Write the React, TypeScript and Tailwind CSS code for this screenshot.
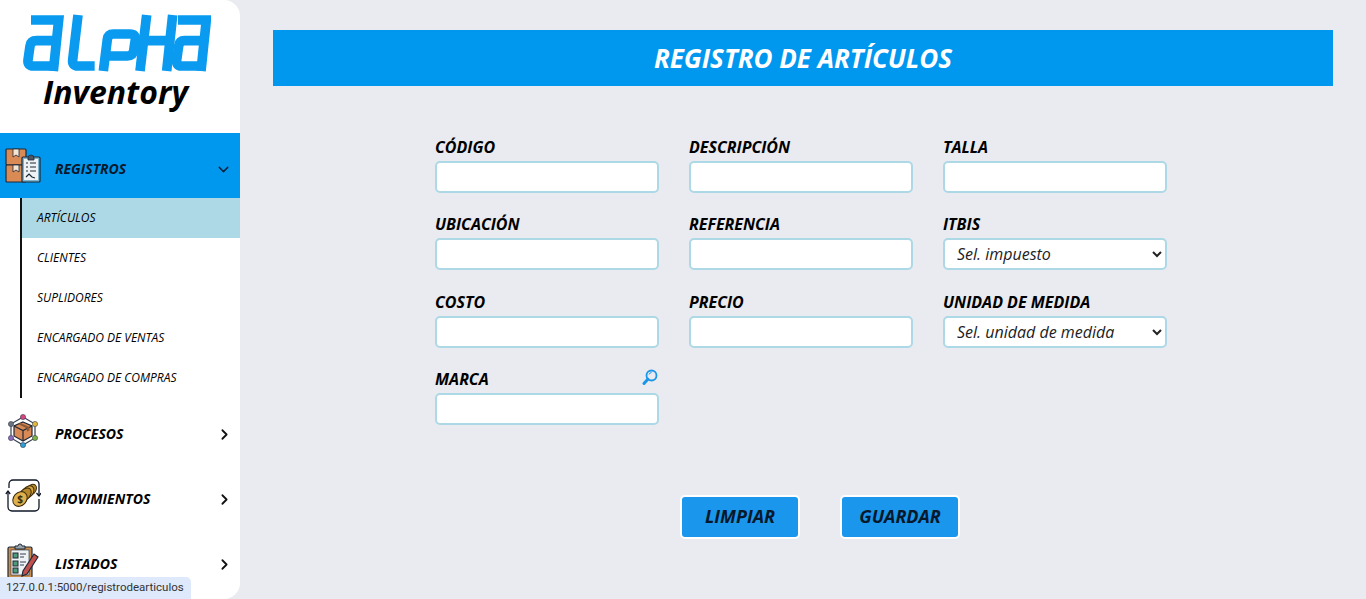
import React from "react";
import { ChevronDown, ChevronRight } from "lucide-react";

const font = { fontFamily: '"Open Sans", sans-serif' };

function AlphaLogo() {
  return (
    <svg viewBox="0 0 585 195" width="195" height="65" fill="none" stroke="#0a9bf0" strokeWidth="29" aria-label="Alpha">
      {/* a */}
      <path d="M45 30H128L112 183" />
      <path d="M116 92H62Q44 92 42 108L36 150Q34 168 52 168H112" />
      {/* L */}
      <path d="M186 15L170 150Q168 168 186 168H236" />
      {/* P */}
      <path d="M262 183L274 88Q276 72 292 72H342Q360 72 358 88L353 122Q351 138 334 138H272" />
      {/* H */}
      <path d="M372 183L392 15" />
      <path d="M470 15L452 183" />
      <path d="M382 92H460" />
      {/* a */}
      <path d="M486 30H571L555 183" />
      <path d="M558 92H506Q490 92 488 108L482 150Q480 168 496 168H555" />
    </svg>
  );
}

function RegistrosIcon() {
  return (
    <svg viewBox="0 0 36 36" width="36" height="36">
      <rect x="1" y="1" width="20" height="16" rx="1" fill="#d98a55" stroke="#1f2937" strokeWidth="1.2" />
      <rect x="1" y="17" width="20" height="17" rx="1" fill="#d98a55" stroke="#1f2937" strokeWidth="1.2" />
      <path d="M8 1h6v8l-3-2-3 2z" fill="#f4e6d4" stroke="#1f2937" strokeWidth=".8" />
      <path d="M8 17h6v7l-3-2-3 2z" fill="#f4e6d4" stroke="#1f2937" strokeWidth=".8" />
      <rect x="17" y="9" width="18" height="25" rx="1" fill="#7fb4cc" stroke="#1f2937" strokeWidth="1.2" />
      <rect x="19" y="11" width="14" height="21" fill="#eef2f4" />
      <path d="M23 10a3 3 0 0 1 6 0v2h-6z" fill="#4b5563" stroke="#1f2937" strokeWidth=".8" />
      <path d="M21 15h2M25 15h6M21 19h2M25 19h6M21 23h2M25 23h6" stroke="#1f2937" strokeWidth="1.2" />
      <path d="M21 29l3-3 3 3 3 1" stroke="#1f2937" strokeWidth="1.2" fill="none" />
    </svg>
  );
}

function ProcesosIcon() {
  const nodes = [
    [17, 3, "#d6457f"],
    [29, 10, "#e3b93c"],
    [29, 24, "#7cb342"],
    [17, 31, "#2f9fd8"],
    [5, 24, "#8e6bbf"],
    [5, 10, "#6b7280"],
  ] as const;
  return (
    <svg viewBox="0 0 34 34" width="34" height="34">
      <path d="M17 3L29 10V24L17 31L5 24V10Z" fill="#fff" stroke="#374151" strokeWidth="1.2" />
      <path d="M17 8l9 4v10l-9 5-9-5V12z" fill="#d98a55" stroke="#1f2937" strokeWidth="1.2" />
      <path d="M8 12l9 4.500 9-4.500M17 16.500V27" fill="none" stroke="#1f2937" strokeWidth="1.2" />
      <path d="M12 10l9 4.500v3l2.500-1v-3.500l-9-4z" fill="#8a5a36" />
      {nodes.map(([cx, cy, c]) => (
        <circle key={`${cx}-${cy}`} cx={cx} cy={cy} r="2.600" fill={c} stroke="#374151" strokeWidth=".6" />
      ))}
    </svg>
  );
}

function MovimientosIcon() {
  return (
    <svg viewBox="0 0 36 33" width="36" height="33">
      {/* frame with the two arrows */}
      <path d="M4 9V5a4 4 0 0 1 4-4h22a4 4 0 0 1 4 4v11" fill="none" stroke="#111827" strokeWidth="1.300" />
      <path d="M34 20v8a4 4 0 0 1-4 4H7a4 4 0 0 1-4-4V13" fill="none" stroke="#111827" strokeWidth="1.300" />
      <path d="M31.500 14l2.500 3 2-3M.8 15l2.200-3 2.200 3" fill="none" stroke="#111827" strokeWidth="1.300" />
      {/* coins */}
      <g stroke="#3b2a0a" strokeWidth="1">
        <ellipse cx="26" cy="11" rx="4.500" ry="6.500" transform="rotate(42 26 11)" fill="#b8892a" />
        <ellipse cx="23" cy="13" rx="5" ry="7" transform="rotate(42 23 13)" fill="#d4a53e" />
        <ellipse cx="20" cy="15.500" rx="5" ry="7.500" transform="rotate(42 20 15.500)" fill="#b8892a" />
        <ellipse cx="15" cy="20" rx="6.500" ry="8" transform="rotate(42 15 20)" fill="#e0b04a" />
      </g>
      <text x="15" y="24" fontSize="10" fontWeight="700" textAnchor="middle" fill="#3b2a0a" style={font}>
        $
      </text>
    </svg>
  );
}

function ListadosIcon() {
  return (
    <svg viewBox="0 0 32 36" width="32" height="36">
      <rect x="1" y="4" width="24" height="31" rx="1.500" fill="#c98d4f" stroke="#1f2937" strokeWidth="1.200" />
      <rect x="4" y="7" width="18" height="25" fill="#eef2f4" stroke="#1f2937" strokeWidth=".6" />
      <path d="M8 5V3h3a2 2 0 0 1 4 0h3v3H8z" fill="#9aa5ad" stroke="#1f2937" strokeWidth="1" />
      <g fill="#4f9a78" stroke="#1f2937" strokeWidth="1">
        <rect x="6" y="10" width="5" height="5" />
        <rect x="6" y="18" width="5" height="5" />
        <rect x="6" y="25" width="5" height="5" />
      </g>
      <path d="M13 11h6M13 14h4M13 19h6M13 22h4" stroke="#374151" strokeWidth="1.200" />
      <path d="M15 33l1-5L27 11l4 3-11 17z" fill="#c2504d" stroke="#1f2937" strokeWidth="1.200" />
    </svg>
  );
}

const subItems = ["ARTÍCULOS", "CLIENTES", "SUPLIDORES", "ENCARGADO DE VENTAS", "ENCARGADO DE COMPRAS"];

function NavRow({ icon, label }: { icon: React.ReactNode; label: string }) {
  return (
    <div className="flex h-[65px] items-center">
      <div className="flex w-[55px] shrink-0 justify-center pr-[9px]">{icon}</div>
      <span className="flex-1 pt-[6px] text-[14px] font-bold italic text-black">{label}</span>
      <ChevronRight size={17} strokeWidth={2.5} className="mr-[7px] mt-[7px] text-[#111]" />
    </div>
  );
}

function Field({ label, search, options }: { label: string; search?: boolean; options?: string }) {
  return (
    <div className="flex flex-col">
      <div className="mb-[2px] flex h-[24px] items-center justify-between">
        <span className="text-[16px] font-bold italic text-black">{label}</span>
        {search && (
          <svg viewBox="0 0 16 16" width="16" height="16" className="mr-[1px] mb-[4px]">
            <circle cx="9.500" cy="6.500" r="5" fill="none" stroke="#1a96ea" strokeWidth="1.800" />
            <path d="M2 14.500L5.800 10.200" stroke="#1a96ea" strokeWidth="3" strokeLinecap="round" />
            <path d="M7 5.500a3 3 0 0 1 2.500-2" fill="none" stroke="#1a96ea" strokeWidth="1" />
          </svg>
        )}
      </div>
      {options ? (
        <select
          defaultValue={options}
          className="h-[32px] w-full rounded-[5px] border-2 border-[#add8e6] bg-white pl-[8px] text-[16px] italic text-[#222]"
        >
          <option>{options}</option>
        </select>
      ) : (
        <input type="text" className="h-[32px] w-full rounded-[5px] border-2 border-[#add8e6] bg-white" />
      )}
    </div>
  );
}

export default function App() {
  return (
    <div className="relative flex h-screen overflow-hidden bg-[#e9ebf0]" style={font}>
      <aside className="flex h-full w-[240px] shrink-0 flex-col overflow-hidden rounded-r-[16px] bg-white">
        <div className="flex h-[133px] shrink-0 flex-col">
          <div className="ml-[16px] mt-[10px]">
            <AlphaLogo />
          </div>
          <div className="mt-[-2px] pl-[43px] text-[32px] font-bold italic leading-[38px] text-black">Inventory</div>
        </div>

        <div className="flex h-[65px] shrink-0 items-center bg-[#0098ef]">
          <div className="flex w-[55px] shrink-0 justify-center pr-[9px]">
            <RegistrosIcon />
          </div>
          <span className="flex-1 pt-[6px] text-[14px] font-bold italic text-[#07182b]">REGISTROS</span>
          <ChevronDown size={17} strokeWidth={2} className="mr-[8px] mt-[7px] text-[#0b2440]" />
        </div>

        <div className="ml-[20px] shrink-0 border-l-2 border-[#111]">
          {subItems.map((item, i) => (
            <div
              key={item}
              className={`flex h-[40px] items-center pl-[15px] text-[12px] italic text-black ${
                i === 0 ? "bg-[#add8e6]" : ""
              }`}
            >
              {item}
            </div>
          ))}
        </div>

        <NavRow icon={<ProcesosIcon />} label="PROCESOS" />
        <NavRow icon={<MovimientosIcon />} label="MOVIMIENTOS" />
        <NavRow icon={<ListadosIcon />} label="LISTADOS" />
      </aside>

      <main className="flex-1 px-[33px] pt-[30px]">
        <div className="flex h-[56px] items-center justify-center bg-[#0098ef]">
          <h1 className="text-[26px] font-bold italic text-white">REGISTRO DE ARTÍCULOS</h1>
        </div>

        <div className="ml-[162px] mt-[49px] grid w-[732px] grid-cols-3 gap-x-[30px] gap-y-[19.33px]">
          <Field label="CÓDIGO" />
          <Field label="DESCRIPCIÓN" />
          <Field label="TALLA" />
          <Field label="UBICACIÓN" />
          <Field label="REFERENCIA" />
          <Field label="ITBIS" options="Sel. impuesto" />
          <Field label="COSTO" />
          <Field label="PRECIO" />
          <Field label="UNIDAD DE MEDIDA" options="Sel. unidad de medida" />
          <Field label="MARCA" search />
        </div>

        <div className="ml-[407px] mt-[70px] flex gap-[40px]">
          <button className="h-[44px] w-[120px] rounded-[5px] border-2 border-white bg-[#1a96ec] text-[18px] font-bold italic text-[#07182b]">
            LIMPIAR
          </button>
          <button className="h-[44px] w-[120px] rounded-[5px] border-2 border-white bg-[#1a96ec] text-[18px] font-bold italic text-[#07182b]">
            GUARDAR
          </button>
        </div>
      </main>

      <div
        className="absolute bottom-0 left-0 flex h-[22px] w-[191px] items-center rounded-tr-[5px] bg-[#dee9fb] pl-[6px] text-[11.5px] text-[#333]"
        style={{ fontFamily: "Roboto, sans-serif" }}
      >
        127.0.0.1:5000/registrodearticulos
      </div>
    </div>
  );
}
